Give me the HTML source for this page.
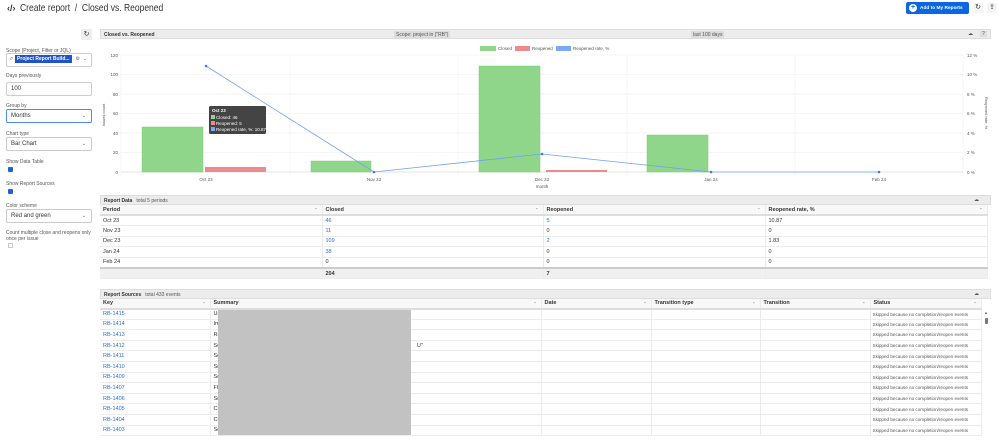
<!DOCTYPE html>
<html><head><meta charset="utf-8"><style>
*{box-sizing:border-box;margin:0;padding:0}
body{width:999px;height:440px;overflow:hidden;background:#fff;font-family:"Liberation Sans",sans-serif;color:#333;position:relative}
.a{position:absolute}
.lbl{position:absolute;left:6px;font-size:5px;color:#555}
.inp{position:absolute;left:6px;width:86px;height:14px;border:1px solid #ccc;border-radius:2px;font-size:6px;padding:3px 4px;color:#333}
.caret{position:absolute;right:5px;top:3px;font-size:5px;color:#555}
.cb{position:absolute;left:8px;width:5px;height:5px;background:#1e63d0;border-radius:1px}
.ph{position:absolute;background:#ececec;border:1px solid #ddd;height:10px;font-size:5px;font-weight:bold;padding:2px 3px;color:#333}
.ph span{font-weight:normal;color:#555;margin-left:4px}
table{position:absolute;border-collapse:collapse;font-size:5.5px;table-layout:fixed}
td,th{border-bottom:1px solid #ececec;border-right:1px solid #ececec;padding:0 3px;text-align:left;white-space:nowrap;overflow:hidden}
th{font-weight:bold;background:#f8f8f8;border-bottom:2px solid #ddd;position:relative}
th i{position:absolute;right:4px;font-style:normal;color:#999;font-size:4px;top:2px}
.lk{color:#2a6ee0}
.st{font-size:4.6px;color:#555;padding:0 2px}
</style></head><body>
<div class="a" style="left:7px;top:3px;font-size:9px;font-weight:bold;color:#333">&lsaquo;/&rsaquo;</div>
<div class="a" style="left:20px;top:2px;font-size:10.5px;color:#333;transform:scaleX(0.81);transform-origin:0 0;white-space:nowrap">Create report &nbsp;/&nbsp; Closed vs. Reopened</div>
<div class="a" style="left:906px;top:2px;width:63px;height:12px;background:#0c66e4;border-radius:2px;color:#fff;font-size:4.8px;font-weight:bold;padding:3.5px 0 0 14px;white-space:nowrap">Add to My Reports</div>
<div class="a" style="left:909px;top:4px;width:8px;height:8px;border-radius:50%;background:#fff;color:#0c66e4;font-size:7px;line-height:8px;text-align:center;font-weight:bold">+</div>
<div class="a" style="left:973px;top:3px;width:10px;height:10px;font-size:7px;text-align:center;background:#f4f4f4">&#x21BB;</div>
<div class="a" style="left:987px;top:3px;width:10px;height:10px;font-size:7px;text-align:center;background:#f4f4f4">&#x21EA;</div>

<div class="a" style="left:81px;top:29px;width:11px;height:11px;background:#eee;font-size:7px;text-align:center;line-height:11px">&#x21BB;</div>
<div class="lbl" style="top:48px">Scope (Project, Filter or JQL)</div>
<div class="inp" style="top:53px;padding:2px 3px"><span style="color:#666">&#x2315;</span> <span style="background:#1f54c8;color:#fff;font-weight:bold;font-size:5px;padding:1px 2px">Project Report Build...</span><span style="position:absolute;right:4px;top:2px;font-size:5px;color:#666">&#x2699; &nbsp;&#x2304;</span></div>
<div class="lbl" style="top:73px">Days previously</div>
<div class="inp" style="top:82px">100</div>
<div class="lbl" style="top:103px">Group by</div>
<div class="inp" style="top:109px;border:1px solid #4c8bf5">Months<span class="caret">&#x2304;</span></div>
<div class="lbl" style="top:131px">Chart type</div>
<div class="inp" style="top:137px">Bar Chart<span class="caret">&#x2304;</span></div>
<div class="lbl" style="top:159px">Show Data Table</div>
<div class="cb" style="top:167px"></div>
<div class="lbl" style="top:181px">Show Report Sources</div>
<div class="cb" style="top:189px"></div>
<div class="lbl" style="top:203px">Color scheme</div>
<div class="inp" style="top:209px">Red and green<span class="caret">&#x2304;</span></div>
<div class="lbl" style="top:230px;width:86px;line-height:6px">Count multiple close and reopens only once per issue</div>
<div class="a" style="left:8px;top:243px;width:5px;height:5px;border:1px solid #ccc"></div>

<div class="ph" style="left:100px;top:29px;width:891px">Closed vs. Reopened
<span class="a" style="left:293px;top:1px;background:#ddd;padding:1px 2px;margin:0;font-weight:normal">Scope: project in ("RB")</span>
<span class="a" style="left:590px;top:1px;background:#ddd;padding:1px 2px;margin:0">last 100 days</span>
<span class="a" style="left:867px;top:1px;margin:0">&#x2601;</span><span class="a" style="left:879px;top:1px;margin:0;background:#ddd;padding:0 2px">?</span></div>

<svg class="a" style="left:0;top:0" width="999" height="440" font-family="Liberation Sans" font-size="4.5" fill="#555">
<g stroke="#eee" stroke-width="0.6">
<line x1="121" y1="55" x2="963" y2="55"/><line x1="121" y1="74.5" x2="963" y2="74.5"/><line x1="121" y1="94" x2="963" y2="94"/><line x1="121" y1="113.5" x2="963" y2="113.5"/><line x1="121" y1="133" x2="963" y2="133"/><line x1="121" y1="152.5" x2="963" y2="152.5"/>
<line x1="290" y1="55" x2="290" y2="176"/><line x1="458" y1="55" x2="458" y2="176"/><line x1="627" y1="55" x2="627" y2="176"/><line x1="795" y1="55" x2="795" y2="176"/>
<line x1="121" y1="55" x2="121" y2="176"/><line x1="963" y1="55" x2="963" y2="176"/>
</g>
<line x1="121" y1="172" x2="963" y2="172" stroke="#ddd" stroke-width="0.8"/>
<g text-anchor="end"><text x="118" y="57">120</text><text x="118" y="76">100</text><text x="118" y="96">80</text><text x="118" y="115">60</text><text x="118" y="135">40</text><text x="118" y="154">20</text><text x="118" y="174">0</text></g>
<g><text x="967" y="57">12 %</text><text x="967" y="76">10 %</text><text x="967" y="96">8 %</text><text x="967" y="115">6 %</text><text x="967" y="135">4 %</text><text x="967" y="154">2 %</text><text x="967" y="174">0 %</text></g>
<text transform="translate(105,115) rotate(-90)" text-anchor="middle" font-size="4">Issues count</text>
<text transform="translate(985,113) rotate(90)" text-anchor="middle" font-size="4">Reopened rate, %</text>
<g text-anchor="middle"><text x="206" y="181">Oct 23</text><text x="374" y="181">Nov 23</text><text x="542" y="181">Dec 23</text><text x="711" y="181">Jan 24</text><text x="879" y="181">Feb 24</text><text x="542" y="188">month</text></g>
<g fill="#8fd68a" stroke="#7ccc76" stroke-width="0.5">
<rect x="142" y="127" width="61" height="45"/><rect x="311" y="161" width="60" height="11"/><rect x="479" y="66" width="61" height="106"/><rect x="647" y="135" width="61" height="37"/></g>
<g fill="#ec8a8e"><rect x="205" y="167" width="61" height="5"/><rect x="546" y="170" width="61" height="2"/></g>
<polyline points="206,66 374,172 542,154 711,172 879,172" fill="none" stroke="#6f9ff5" stroke-width="0.8"/>
<g fill="#3b7af0"><circle cx="206" cy="66" r="1.3"/><circle cx="374" cy="172" r="1.3"/><circle cx="542" cy="154" r="1.3"/><circle cx="711" cy="172" r="1.3"/><circle cx="879" cy="172" r="1.3"/></g>
<rect x="480" y="46" width="16" height="5" fill="#8fd68a"/><text x="498" y="50">Closed</text>
<rect x="515" y="46" width="15" height="5" fill="#ec8a8e"/><text x="532" y="50">Reopened</text>
<rect x="556" y="46" width="15" height="5" fill="#7ba7f5"/><text x="573" y="50">Reopened rate, %</text>
<rect x="209" y="106" width="57" height="28" rx="1.5" fill="#444"/>
<g fill="#fff" font-size="4.5"><text x="212" y="112" font-weight="bold">Oct 23</text>
<rect x="211" y="115" width="4" height="4" fill="#8fd68a"/><text x="216" y="119">Closed: 46</text>
<rect x="211" y="121" width="4" height="4" fill="#ec8a8e"/><text x="216" y="125">Reopened: 5</text>
<rect x="211" y="127" width="4" height="4" fill="#7ba7f5"/><text x="216" y="131">Reopened rate, %: 10.87</text></g>
</svg>

<div class="ph" style="left:100px;top:195px;width:891px">Report Data<span>total 5 periods</span><span class="a" style="left:873px;top:1px;margin:0">&#x2601;</span></div>
<table style="left:100px;top:205px;width:887px">
<colgroup><col style="width:222px"><col style="width:221px"><col style="width:222px"><col style="width:222px"></colgroup>
<tr style="height:10px"><th>Period<i>&#x2303;</i></th><th>Closed<i>&#x2303;</i></th><th>Reopened<i>&#x2303;</i></th><th>Reopened rate, %<i>&#x2303;</i></th></tr>
<tr style="height:10.6px"><td>Oct 23</td><td class="lk">46</td><td class="lk">5</td><td>10.87</td></tr>
<tr style="height:10.6px"><td>Nov 23</td><td class="lk">11</td><td>0</td><td>0</td></tr>
<tr style="height:10.6px"><td>Dec 23</td><td class="lk">109</td><td class="lk">2</td><td>1.83</td></tr>
<tr style="height:10.6px"><td>Jan 24</td><td class="lk">38</td><td>0</td><td>0</td></tr>
<tr style="height:10.6px"><td>Feb 24</td><td>0</td><td>0</td><td>0</td></tr>
<tr style="height:11px;background:#f0f0f0;font-weight:bold"><td style="border-top:2px solid #ccc"></td><td style="border-top:2px solid #ccc">204</td><td style="border-top:2px solid #ccc">7</td><td style="border-top:2px solid #ccc"></td></tr>
</table>

<div class="ph" style="left:100px;top:289px;width:891px">Report Sources<span>total 433 events</span><span class="a" style="left:873px;top:1px;margin:0">&#x2601;</span></div>
<table style="left:100px;top:299px;width:881px">
<colgroup><col style="width:110px"><col style="width:331px"><col style="width:110px"><col style="width:109px"><col style="width:110px"><col style="width:111px"></colgroup>
<tr style="height:9.5px"><th>Key<i>&#x2303;</i></th><th>Summary<i>&#x2303;</i></th><th>Date<i>&#x2303;</i></th><th>Transition type<i>&#x2303;</i></th><th>Transition<i>&#x2303;</i></th><th>Status<i>&#x2303;</i></th></tr>
<tr style="height:10.6px"><td class="lk">RB-1415</td><td>Ur</td><td></td><td></td><td></td><td class="st">Skipped because no completion/reopen events</td></tr>
<tr style="height:10.6px"><td class="lk">RB-1414</td><td>Im</td><td></td><td></td><td></td><td class="st">Skipped because no completion/reopen events</td></tr>
<tr style="height:10.6px"><td class="lk">RB-1413</td><td>Re</td><td></td><td></td><td></td><td class="st">Skipped because no completion/reopen events</td></tr>
<tr style="height:10.6px"><td class="lk">RB-1412</td><td>Sc<span style="margin-left:197px">U"</span></td><td></td><td></td><td></td><td class="st">Skipped because no completion/reopen events</td></tr>
<tr style="height:10.6px"><td class="lk">RB-1411</td><td>Sc</td><td></td><td></td><td></td><td class="st">Skipped because no completion/reopen events</td></tr>
<tr style="height:10.6px"><td class="lk">RB-1410</td><td>Sc</td><td></td><td></td><td></td><td class="st">Skipped because no completion/reopen events</td></tr>
<tr style="height:10.6px"><td class="lk">RB-1409</td><td>Sc</td><td></td><td></td><td></td><td class="st">Skipped because no completion/reopen events</td></tr>
<tr style="height:10.6px"><td class="lk">RB-1407</td><td>Fl</td><td></td><td></td><td></td><td class="st">Skipped because no completion/reopen events</td></tr>
<tr style="height:10.6px"><td class="lk">RB-1406</td><td>Sc</td><td></td><td></td><td></td><td class="st">Skipped because no completion/reopen events</td></tr>
<tr style="height:10.6px"><td class="lk">RB-1405</td><td>Ch</td><td></td><td></td><td></td><td class="st">Skipped because no completion/reopen events</td></tr>
<tr style="height:10.6px"><td class="lk">RB-1404</td><td>Ch</td><td></td><td></td><td></td><td class="st">Skipped because no completion/reopen events</td></tr>
<tr style="height:10.6px"><td class="lk">RB-1403</td><td>Sc</td><td></td><td></td><td></td><td class="st">Skipped because no completion/reopen events</td></tr>
</table>
<div class="a" style="left:984px;top:310px;font-size:4px;color:#666">&#x25B2;</div>
<div class="a" style="left:985px;top:318px;width:3px;height:6px;background:#777;border-radius:1px"></div>
<div class="a" style="left:218px;top:310px;width:193px;height:125px;background:#c2c2c2"></div>
</body></html>
